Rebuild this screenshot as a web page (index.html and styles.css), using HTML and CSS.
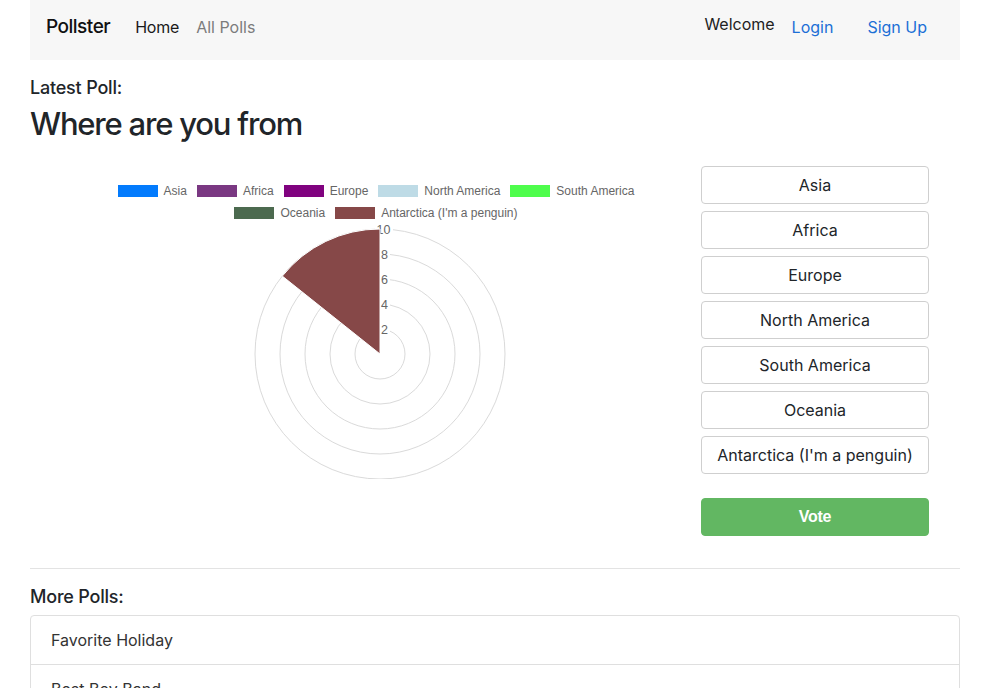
FILE: index.html
```html
<!DOCTYPE html>
<html lang="en">
<head>
<meta charset="utf-8">
<title>Pollster</title>
<link rel="stylesheet" href="styles.css">
</head>
<body>
<div class="page">
  <nav class="navbar">
    <div class="nav-left">
      <a class="brand" href="#">Pollster</a>
      <a class="nav-link active" href="#">Home</a>
      <a class="nav-link muted" href="#">All Polls</a>
    </div>
    <div class="nav-right">
      <span class="welcome">Welcome</span>
      <a class="nav-link blue" href="#">Login</a>
      <a class="nav-link blue signup" href="#">Sign Up</a>
    </div>
  </nav>

  <h5 class="label">Latest Poll:</h5>
  <h2 class="poll-title">Where are you from</h2>

  <div class="poll-row">
    <div class="chart-col">
      <div class="legend">
        <span class="legend-item"><span class="swatch sw-asia"></span>Asia</span>
        <span class="legend-item"><span class="swatch sw-africa"></span>Africa</span>
        <span class="legend-item"><span class="swatch sw-europe"></span>Europe</span>
        <span class="legend-item"><span class="swatch sw-na"></span>North America</span>
        <span class="legend-item"><span class="swatch sw-sa"></span>South America</span>
        <span class="legend-item"><span class="swatch sw-oceania"></span>Oceania</span>
        <span class="legend-item"><span class="swatch sw-antarctica"></span>Antarctica (I'm a penguin)</span>
      </div>
      <svg class="polar" width="671" height="255" viewBox="0 0 671 255">
        <g fill="none" stroke="#dadada" stroke-width="1">
          <circle cx="350" cy="130" r="25"/>
          <circle cx="350" cy="130" r="50"/>
          <circle cx="350" cy="130" r="75"/>
          <circle cx="350" cy="130" r="100"/>
          <circle cx="350" cy="130" r="125"/>
        </g>
        <g fill="#fff">
          <rect x="349" y="97" width="11" height="16"/>
          <rect x="349" y="72" width="11" height="16"/>
          <rect x="349" y="47" width="11" height="16"/>
          <rect x="349" y="22" width="11" height="16"/>
          <rect x="345" y="-3" width="18" height="16"/>
        </g>
        <g class="tick" fill="#666" text-anchor="middle">
          <text x="354.5" y="109.5">2</text>
          <text x="354.5" y="84.5">4</text>
          <text x="354.5" y="59.5">6</text>
          <text x="354.5" y="34.5">8</text>
          <text x="353.5" y="9.5">10</text>
        </g>
        <path d="M350,130 L350,5 A125,125 0 0 0 252.3,52.1 Z" fill="#864848" stroke="#fff" stroke-width="1"/>
      </svg>
    </div>
    <div class="vote-col">
      <button class="option">Asia</button>
      <button class="option">Africa</button>
      <button class="option">Europe</button>
      <button class="option">North America</button>
      <button class="option">South America</button>
      <button class="option">Oceania</button>
      <button class="option">Antarctica (I'm a penguin)</button>
      <button class="vote">Vote</button>
    </div>
  </div>

  <hr class="divider">

  <h5 class="label more">More Polls:</h5>
  <ul class="list-group">
    <li class="list-item">Favorite Holiday</li>
    <li class="list-item">Best Boy Band</li>
  </ul>
</div>
</body>
</html>
```

FILE: styles.css
```css
* { box-sizing: border-box; }

html, body { height: 100%; }

body {
  margin: 0;
  font-family: Inter, "Noto Sans", sans-serif;
  color: #212529;
  background: #fff;
  font-size: 16px;
  line-height: 1.5;
  overflow: hidden;
}

.page {
  width: 930px;
  margin-left: 30px;
}

/* navbar */
.navbar {
  height: 60px;
  background: #f7f7f7;
  display: flex;
  justify-content: space-between;
  align-items: center;
  padding: 0 33px 6px 16px;
}

.nav-left, .nav-right {
  display: flex;
  align-items: center;
}

.brand {
  font-size: 19px;
  font-weight: 500;
  color: #111;
  text-decoration: none;
  margin-right: 25px;
  padding-top: 1px;
  letter-spacing: -0.5px;
}

.nav-link {
  font-size: 16px;
  text-decoration: none;
  color: #1c6fd6;
}

.nav-link.active { color: #1a1a1a; margin-right: 17px; letter-spacing: -0.2px; }
.nav-link.muted { color: #7c7c7c; }

.welcome {
  font-size: 16px;
  color: #222;
  margin-right: 17px;
  padding-bottom: 6px;
}

.nav-link.signup { margin-left: 34px; }

/* headings */
.label {
  margin: 16px 0 0;
  font-size: 18px;
  font-weight: 500;
  line-height: 24px;
  letter-spacing: -0.2px;
}

.poll-title {
  margin: 5px 0 0;
  font-size: 31px;
  font-weight: 500;
  line-height: 38px;
  letter-spacing: -1.2px;
}

/* poll row */
.poll-row {
  display: grid;
  grid-template-columns: 671px 228px;
  margin-top: 23px;
}

.chart-col {
  padding-top: 14px;
}

.legend {
  display: flex;
  flex-wrap: wrap;
  justify-content: center;
  width: 540px;
  margin-left: 76px;
  font-family: "Liberation Sans", Arial, sans-serif;
  font-size: 12px;
  color: #666;
  line-height: 22px;
}

.legend-item {
  display: inline-flex;
  align-items: center;
  margin: 0 5px;
  white-space: nowrap;
}

.swatch {
  display: inline-block;
  width: 40px;
  height: 12px;
  margin-right: 6px;
}

.sw-asia { background: #037bfd; }
.sw-africa { background: #7a3882; }
.sw-europe { background: #80027f; }
.sw-na { background: #bedbe6; }
.sw-sa { background: #4efd4c; }
.sw-oceania { background: #4c6a4f; }
.sw-antarctica { background: #864848; }

.polar {
  display: block;
}

.tick {
  font-family: "Liberation Sans", Arial, sans-serif;
  font-size: 12.5px;
}

.vote-col {
  display: flex;
  flex-direction: column;
}

.option {
  height: 38px;
  margin-bottom: 7px;
  background: #fff;
  border: 1px solid #cfcfcf;
  border-radius: 4px;
  font-family: Inter, "Noto Sans", sans-serif;
  font-size: 16px;
  color: #212529;
  padding: 0;
}

.vote {
  height: 38px;
  margin-top: 17px;
  background: #62b762;
  border: 1px solid #62b762;
  border-radius: 4px;
  color: #fff;
  font-family: "Liberation Sans", Arial, sans-serif;
  font-weight: 700;
  font-size: 16px;
  letter-spacing: -0.3px;
  padding: 0;
}

/* lower part */
.divider {
  margin: 32px 0 0;
  border: 0;
  border-top: 1px solid #e3e3e3;
  height: 0;
}

.label.more {
  margin-top: 16px;
}

.list-group {
  list-style: none;
  margin: 6px 0 0;
  padding: 0;
  border: 1px solid #dfdfdf;
  border-radius: 4px;
}

.list-item {
  padding: 12px 20px;
  font-size: 16px;
  line-height: 24px;
  color: #333;
  border-top: 1px solid #dfdfdf;
}

.list-item:first-child { border-top: 0; }
```
